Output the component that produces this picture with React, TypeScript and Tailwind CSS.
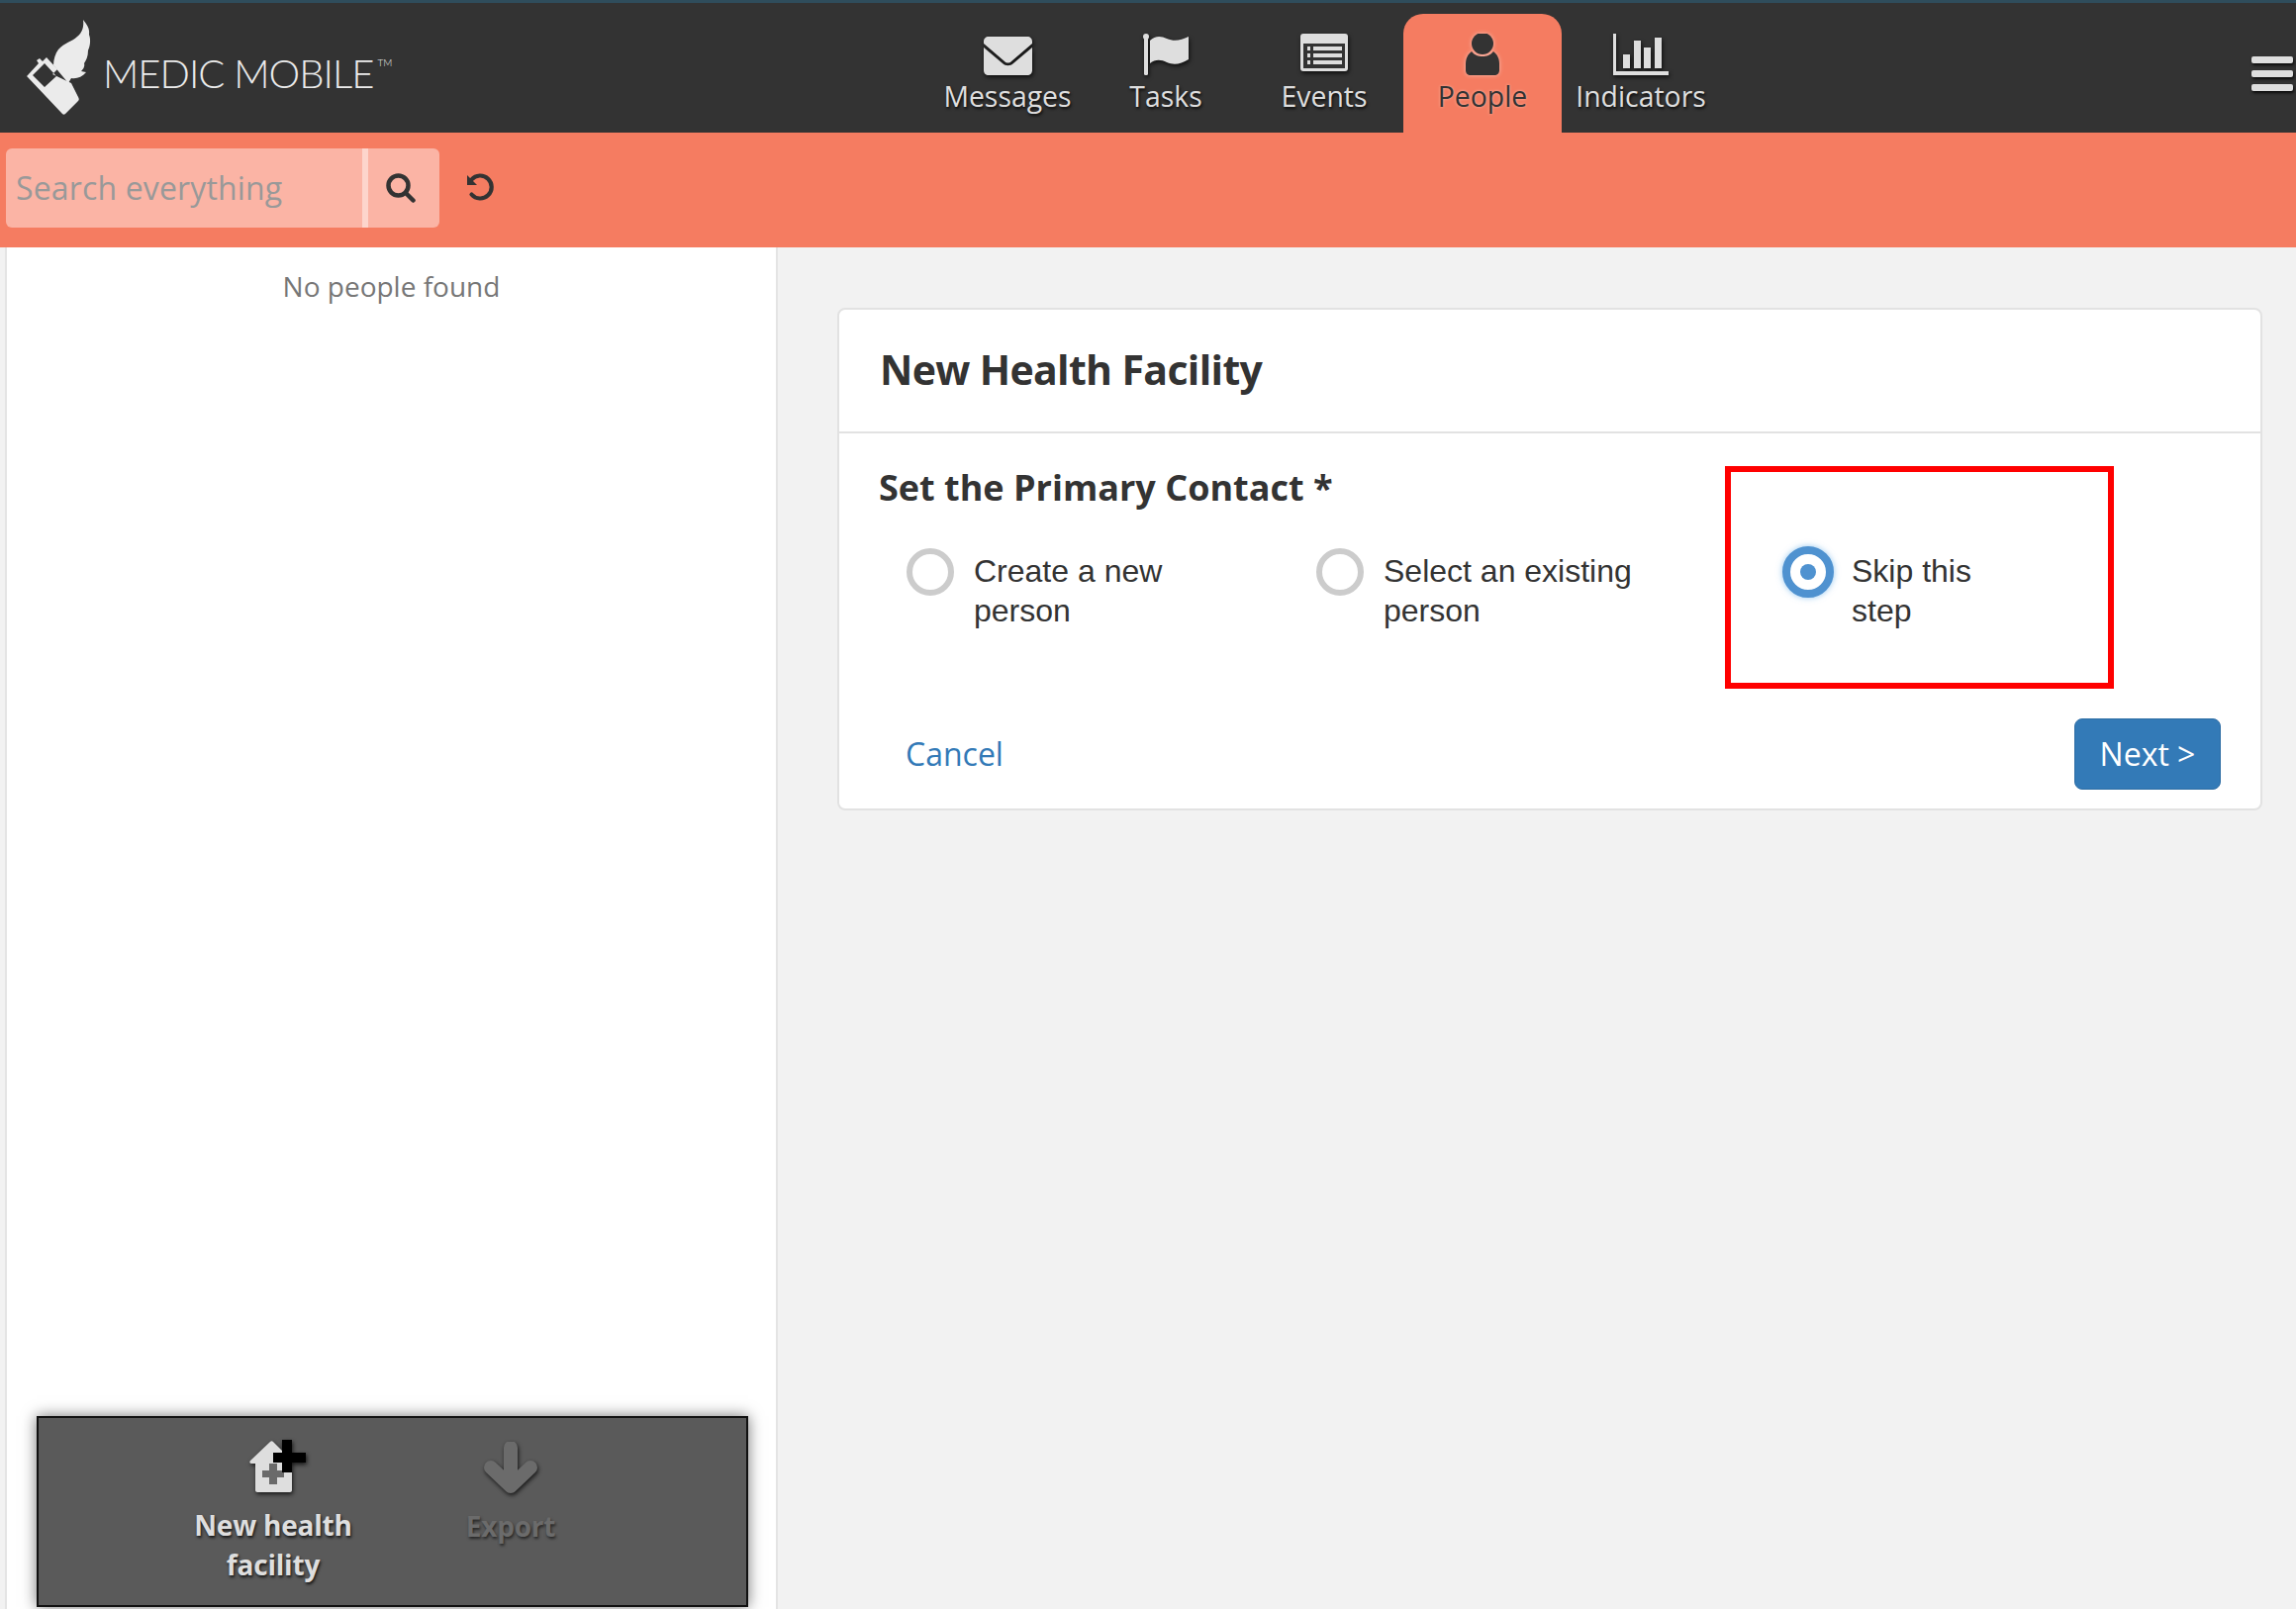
import React from 'react';

const sans = "font-['Open_Sans',sans-serif]";
const glow = '[filter:drop-shadow(1px_2px_2px_rgba(0,0,0,0.75))]';

function Wing() {
  return (
    <svg width="65" height="96" viewBox="0 0 65 96" className="shrink-0">
      <path
        fill="#ebebeb"
        d="M57 0C60 4 64 8 63 15C65 20 64 27 62 31C62 37 60 41 58 44C59 47 57 50 55 52L60 53C56 58 50 60 45 59L42 64L27 46C27 40 29 34 32 30C38 23 46 22 51 17C56 13 58 7 57 0Z"
      />
      <path
        fill="#ebebeb"
        fillRule="evenodd"
        d="M1 56L12 44L10 41L13 39L16 42L20 38L31 50L26 55L45 64L52 78C53 80 53 81 52 82L39 95C38 96 37 96 36 95L1 58C0 57 0 57 1 56ZM6 56L18 68L30 57L18 44Z"
      />
    </svg>
  );
}

function MessagesIcon() {
  return (
    <svg width="49" height="39" viewBox="0 0 49 39" fill="#dedede" className={glow}>
      <path d="M5 0H44C47 0 49 2 49 5V7L28 25C26 27 23 27 21 25L0 7V5C0 2 2 0 5 0Z" />
      <path d="M0 11L19 27C22 30 27 30 30 27L49 11V34C49 37 47 39 44 39H5C2 39 0 37 0 34Z" />
    </svg>
  );
}

function TasksIcon() {
  return (
    <svg width="47" height="42" viewBox="0 0 47 42" fill="#dedede" className={glow}>
      <circle cx="3" cy="3" r="3" />
      <rect x="1" y="4" width="4" height="38" rx="1.5" />
      <path d="M7 7C12 2 18 2 24 5C31 8 38 7 46 3V26C38 31 31 32 24 29C18 26 12 26 7 30Z" />
    </svg>
  );
}

function EventsIcon() {
  return (
    <svg width="48" height="38" viewBox="0 0 48 38" className={`mb-[4px] ${glow}`}>
      <rect width="48" height="38" rx="3" fill="#dedede" />
      <rect x="3" y="10" width="42" height="25" fill="#333333" />
      <g fill="#dedede">
        <rect x="7" y="13" width="3" height="4" />
        <rect x="7" y="20" width="3" height="4" />
        <rect x="7" y="27" width="3" height="4" />
        <rect x="13" y="13" width="29" height="4" />
        <rect x="13" y="20" width="29" height="4" />
        <rect x="13" y="27" width="29" height="4" />
      </g>
    </svg>
  );
}

function PeopleIcon() {
  return (
    <svg width="36" height="42" viewBox="0 0 36 42" fill="#333333" className="[filter:drop-shadow(0_0_2px_rgba(255,255,255,0.5))]">
      <ellipse cx="18" cy="10" rx="11" ry="11" />
      <path d="M7 18C10 22 14 23 18 23C22 23 26 22 29 18C33 21 35 25 35 31V37C35 40 33 42 30 42H6C3 42 1 40 1 37V31C1 25 3 21 7 18Z" />
    </svg>
  );
}

function IndicatorsIcon() {
  return (
    <svg width="56" height="42" viewBox="0 0 56 42" fill="#dedede" className={glow}>
      <rect x="0" y="0" width="3" height="42" />
      <rect x="0" y="38" width="56" height="4" />
      <rect x="10" y="21" width="7" height="14" />
      <rect x="21" y="7" width="7" height="28" />
      <rect x="31" y="14" width="7" height="21" />
      <rect x="42" y="4" width="7" height="31" />
    </svg>
  );
}

function HouseIcon() {
  return (
    <svg width="62" height="54" viewBox="0 0 62 54" className={`ml-[12px] ${glow}`}>
      <path fill="#dedede" d="M25 2L44 21V51C44 52 43 53 42 53H9C8 53 7 52 7 51V24H3C1 24 1 22 2 21L22 2C23 1 24 1 25 2Z" />
      <path fill="#6a6a6a" d="M21 24H29V31H36V38H29V45H21V38H14V31H21Z" />
      <path fill="#000000" d="M34 0H44V13H58V23H44V33H34V23H25V13H34Z" />
    </svg>
  );
}

function ExportIcon() {
  return (
    <svg width="54" height="52" viewBox="0 0 54 52" fill="none" className={glow}>
      <path d="M27 6V45M7 26L27 45L47 26" stroke="#6b6b6b" strokeWidth="14" strokeLinecap="round" strokeLinejoin="round" />
    </svg>
  );
}

const tabs = [
  { label: 'Messages', icon: <MessagesIcon /> },
  { label: 'Tasks', icon: <TasksIcon /> },
  { label: 'Events', icon: <EventsIcon /> },
  { label: 'People', icon: <PeopleIcon />, active: true },
  { label: 'Indicators', icon: <IndicatorsIcon /> },
];

const options = [
  { label: 'Create a new', line2: 'person', width: 'w-[414px]' },
  { label: 'Select an existing', line2: 'person', width: 'w-[413px]' },
];

export default function App() {
  return (
    <div className={`flex h-[1626px] w-[2320px] flex-col overflow-hidden bg-[#f2f2f2] ${sans}`}>
      {/* Top bar */}
      <header className="flex h-[134px] shrink-0 border-t-[3px] border-[#2f4d5c] bg-[#333333]">
        <div className="flex w-[938px] shrink-0 items-start pl-[27px] pt-[17px]">
          <Wing />
          <span className="ml-[12px] mt-[29px] font-['Lato',sans-serif] text-[40px] font-light leading-[50px] tracking-[-1px] text-[#ebebeb]">
            MEDIC MOBILE
          </span>
          <span className="ml-[4px] mt-[37px] font-['Lato',sans-serif] text-[10px] font-light leading-[12px] text-[#ebebeb]">TM</span>
        </div>
        <nav className="flex w-[800px] shrink-0 pt-[11px]">
          {tabs.map((tab) => (
            <a
              key={tab.label}
              className={`flex h-[120px] w-[160px] flex-col items-center rounded-t-[20px] ${
                tab.active
                  ? 'bg-[#f57c61] text-[#333333] [text-shadow:0_0_3px_rgba(255,255,255,0.45)]'
                  : 'text-[#dedede] [text-shadow:1px_2px_3px_rgba(0,0,0,0.8)]'
              }`}
            >
              <div className="flex h-[62px] items-end">{tab.icon}</div>
              <span className="mt-[2px] text-[28.4px] leading-[38px]">{tab.label}</span>
            </a>
          ))}
        </nav>
        <div className="flex flex-1 flex-col items-end gap-[7px] pr-[3px] pt-[54px]">
          <div className="h-[7px] w-[42px] rounded-[2px] bg-[#dedede] shadow-[1px_2px_3px_rgba(0,0,0,0.8)]" />
          <div className="h-[7px] w-[42px] rounded-[2px] bg-[#dedede] shadow-[1px_2px_3px_rgba(0,0,0,0.8)]" />
          <div className="h-[7px] w-[42px] rounded-[2px] bg-[#dedede] shadow-[1px_2px_3px_rgba(0,0,0,0.8)]" />
        </div>
      </header>

      {/* Search */}
      <div className="flex h-[116px] shrink-0 items-start bg-[#f57c61] pl-[6px] pt-[16px]">
        <div className="flex h-[80px] w-[438px] overflow-hidden rounded-[6px] bg-[#fbb4a5]">
          <div className="flex w-[366px] shrink-0 items-center border-r-[6px] border-[#fdd5cc] pl-[10px] text-[32px] tracking-[0.15px] text-[#999999]">
            Search everything
          </div>
          <div className="flex flex-1 items-center justify-center pr-[7px]">
            <svg width="30" height="30" viewBox="0 0 30 30" fill="none" stroke="#333333" strokeWidth="4.5" strokeLinecap="round">
              <circle cx="12.5" cy="12.5" r="10" />
              <path d="M20 20L27.5 27.5" />
            </svg>
          </div>
        </div>
        <svg width="28" height="28" viewBox="0 0 28 28" fill="none" stroke="#333333" strokeWidth="4.2" className="ml-[27px] mt-[25px]">
          <path d="M5.5 6.5A11.5 11.5 0 1 1 5.5 21.5" strokeLinecap="round" />
          <path d="M1 2V12H11Z" fill="#333333" stroke="none" />
        </svg>
      </div>

      <div className="flex min-h-0 flex-1">
        {/* People list */}
        <aside className="ml-[5px] flex w-[781px] shrink-0 flex-col border-x-2 border-[#e4e4e4] bg-white">
          <p className="pt-[19px] text-center text-[28px] leading-[40px] text-[#777777]">No people found</p>
          <div className="mt-auto mb-[2px] ml-[30px] flex h-[193px] w-[719px] border-2 border-[#111111] bg-[#5a5a5a] shadow-[0_0_14px_rgba(0,0,0,0.55)]">
            <div className="ml-[117px] flex w-[240px] flex-col items-center pt-[22px]">
              <HouseIcon />
              <span className="mt-[12px] text-center text-[28px] font-bold leading-[40px] tracking-[-0.2px] text-[#dedede] [text-shadow:1px_2px_3px_rgba(0,0,0,0.8)]">
                New health
                <br />
                facility
              </span>
            </div>
            <div className="flex w-[240px] flex-col items-center pt-[24px]">
              <ExportIcon />
              <span className="mt-[13px] text-[28px] font-bold leading-[40px] tracking-[-0.2px] text-[#6b6b6b] [text-shadow:1px_2px_3px_rgba(0,0,0,0.6)]">
                Export
              </span>
            </div>
          </div>
        </aside>

        {/* Form */}
        <main className="flex-1 pl-[60px] pt-[61px]">
          <section className="h-[508px] w-[1440px] rounded-[8px] border-2 border-[#e2e2e2] bg-white">
            <div className="flex h-[125px] items-center border-b-2 border-[#e2e2e2] pb-[4px] pl-[41px]">
              <h1 className="text-[41px] font-bold leading-[50px] tracking-[-0.65px] text-[#333333]">New Health Facility</h1>
            </div>
            <div className="relative pl-[40px] pt-[32px]">
              <h2 className="text-[36px] font-bold leading-[46px] text-[#333333]">Set the Primary Contact *</h2>
              <div className="mt-[38px] flex pl-[28px] font-['Liberation_Sans',sans-serif] text-[32px] leading-[40px] text-[#333333]">
                {options.map((opt) => (
                  <div key={opt.label} className={`flex ${opt.width}`}>
                    <div className="h-[48px] w-[48px] shrink-0 rounded-full border-[6px] border-[#cccccc]" />
                    <div className="ml-[20px] pt-[3px]">
                      {opt.label}
                      <br />
                      {opt.line2}
                    </div>
                  </div>
                ))}
                <div className="-mt-[2px] ml-[58px] flex">
                  <div className="flex h-[52px] w-[52px] shrink-0 items-center justify-center rounded-full border-[8px] border-[#4f92d0] bg-white shadow-[0_0_6px_rgba(102,175,233,0.7)]">
                    <div className="h-[16px] w-[16px] rounded-full bg-[#4f92d0]" />
                  </div>
                  <div className="ml-[18px] pt-[5px]">
                    Skip this
                    <br />
                    step
                  </div>
                </div>
              </div>
              {/* annotation box drawn over the form */}
              <div className="absolute left-[895px] top-[33px] h-[225px] w-[393px] border-[6px] border-[#ff0000]" />
              <div className="mt-[89px] flex items-center justify-between pr-[40px]">
                <a className="ml-[27px] text-[32px] leading-[44px] text-[#337ab7]">Cancel</a>
                <button className="flex h-[72px] w-[148px] items-center justify-center rounded-[8px] border border-[#2e6da4] bg-[#337ab7] text-[32px] text-white">
                  Next &gt;
                </button>
              </div>
            </div>
          </section>
        </main>
      </div>
    </div>
  );
}
